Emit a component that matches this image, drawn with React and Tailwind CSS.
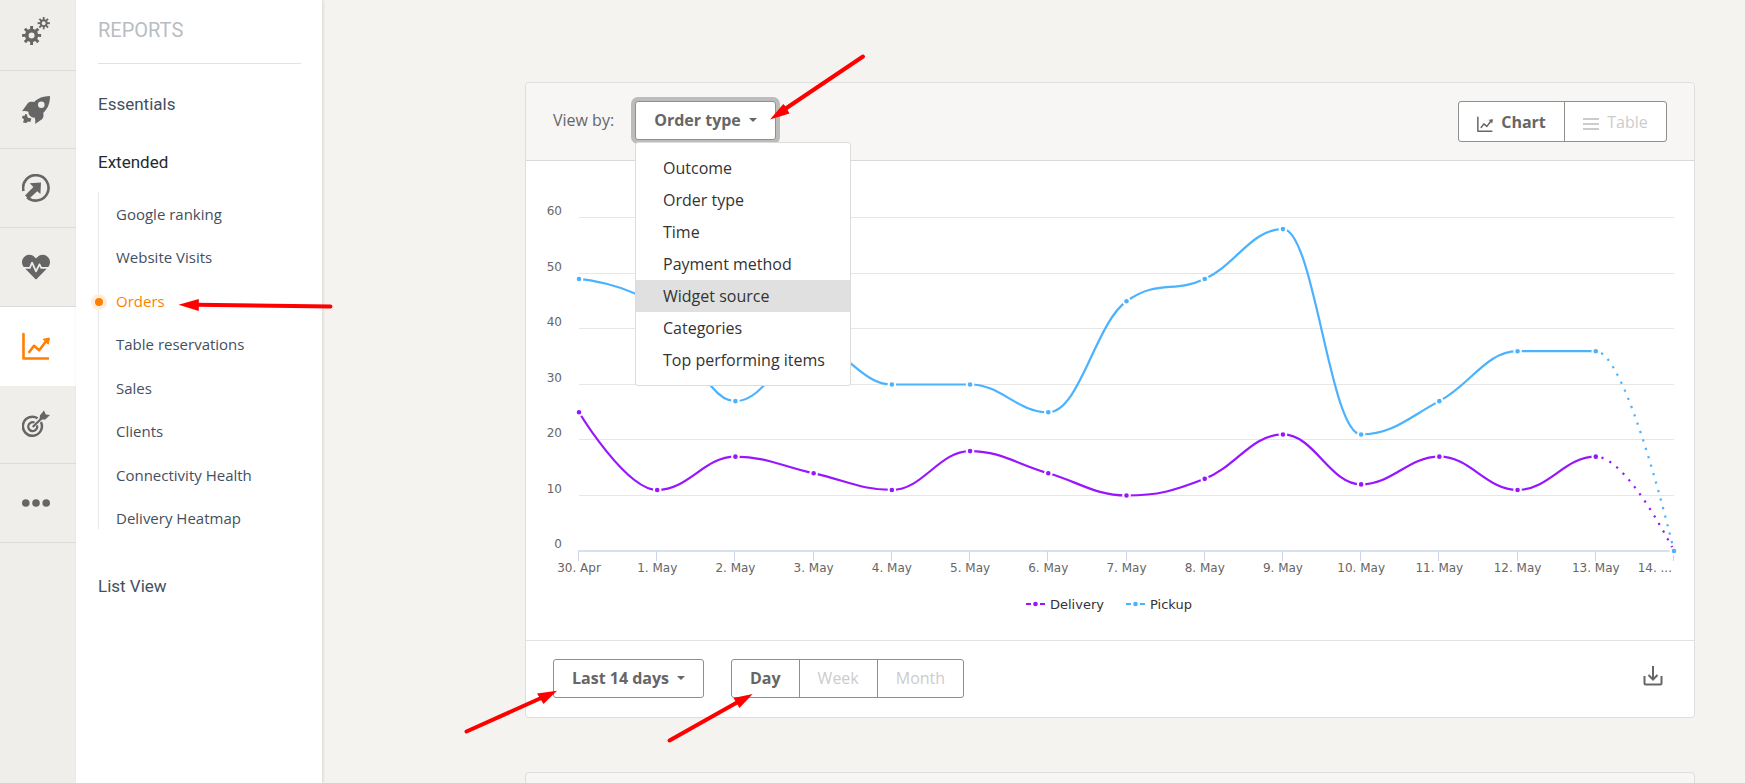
import React, { useState } from 'react';
import { FaHeartbeat } from 'react-icons/fa';

// --- Report data ---
const DAYS = ['30. Apr', '1. May', '2. May', '3. May', '4. May', '5. May', '6. May', '7. May', '8. May', '9. May', '10. May', '11. May', '12. May', '13. May', '14. ...'];

const SERIES = [
    { name: 'Delivery', color: '#9715ff', values: [25, 11, 17, 14, 11, 18, 14, 10, 13, 21, 12, 17, 11, 17, 0] },
    { name: 'Pickup', color: '#4ab2ff', values: [49, 44, 27, 37, 30, 30, 25, 45, 49, 58, 21, 27, 36, 36, 0] },
];

const VIEW_OPTIONS = ['Outcome', 'Order type', 'Time', 'Payment method', 'Widget source', 'Categories', 'Top performing items'];

const REPORTS = ['Google ranking', 'Website Visits', 'Orders', 'Table reservations', 'Sales', 'Clients', 'Connectivity Health', 'Delivery Heatmap'];

// --- Icons ---
const gearPath = (cx, cy, outer, inner, teeth) => {
    const points = [];
    const step = (Math.PI * 2) / teeth;
    for (let i = 0; i < teeth; i++) {
        const a = i * step - Math.PI / 2;
        [[-0.27, inner], [-0.2, outer], [0.2, outer], [0.27, inner]].forEach(([k, r]) => {
            points.push(`${(cx + r * Math.cos(a + k * step)).toFixed(2)} ${(cy + r * Math.sin(a + k * step)).toFixed(2)}`);
        });
    }
    return `M${points.join('L')}Z`;
};

const hole = (cx, cy, r) => `M${cx - r} ${cy}a${r} ${r} 0 1 0 ${r * 2} 0a${r} ${r} 0 1 0 ${-r * 2} 0Z`;

const GearsIcon = () => (
    <svg viewBox="0 0 28 28" className="size-7" fill="currentColor" fillRule="evenodd">
        <path d={gearPath(9.6, 18.4, 9.6, 6.7, 8) + hole(9.6, 18.4, 3)} />
        <path d={gearPath(21.7, 6.2, 6.2, 4, 8) + hole(21.7, 6.2, 2)} />
    </svg>
);

const RocketIcon = () => (
    <svg viewBox="0 0 28 28" className="size-7" fill="currentColor" fillRule="evenodd">
        <path d={'M28 0C21 .2 16 2 12.2 6C9.500 5.600 7.200 5.800 5.800 7.200L0 15.300C2.500 14.800 4.600 15 6.400 15.700C6.300 17.500 7 19 8.300 20C9.500 21.200 10.900 21.800 12.600 21.600C13.300 23.500 13.600 25.600 13.100 28L20 23.300C21.600 21.800 21.700 19.500 21.300 16.800C26 12.500 28 7 28 0Z' + hole(19.3, 8.7, 3.3)} />
        <path d="M3.200 18L5 18.600L5.600 21.500L9.400 22.600L8.300 26L5.800 25.500L4.500 27L1 26.600L2 23.600L0 21.800L.6 19.700L2.700 19.800Z" />
    </svg>
);

const LaunchIcon = () => (
    <svg viewBox="0 0 28 28" className="size-7">
        <path d="M1.500 17A12.700 12.700 0 1 1 5.200 23.200" fill="none" stroke="currentColor" strokeWidth="2.600" />
        <path d="M7.700 9.200L19 8.600L18.400 20L15.200 17.200L6.800 25L3 21.600L11.400 13Z" fill="currentColor" />
    </svg>
);

const TrendIcon = ({ className, weight = 2.6 }) => (
    <svg viewBox="0 0 28 28" className={className} fill="none" stroke="currentColor" strokeWidth={weight} strokeLinecap="round" strokeLinejoin="round">
        <path d="M1.500 2V26.500H26" />
        <path d="M7.300 20L12 13.800L17.200 18.200L23.500 10" />
        <path d="M21.500 7.200L27.500 6L26.300 11.800Z" fill="currentColor" strokeWidth="1" />
    </svg>
);

const TargetIcon = () => (
    <svg viewBox="0 0 28 28" className="size-7" fill="none" stroke="currentColor">
        <path d="M15.600 8.300A9.500 9.500 0 1 0 18.900 12" strokeWidth="2.500" />
        <path d="M12.500 12.500A4.500 4.500 0 1 0 15 15.300" strokeWidth="2.300" />
        <path d="M10.700 17L21 7" strokeWidth="2.200" />
        <path d="M17.500 9.600L18 5.300L22 .6L23.800 4.400L28 5L23.300 9.600Z" fill="currentColor" stroke="none" />
    </svg>
);

const DotsIcon = () => (
    <svg viewBox="0 0 28 28" className="size-7" fill="currentColor">
        <circle cx="3.800" cy="14" r="3.800" />
        <circle cx="14" cy="14" r="3.800" />
        <circle cx="24.200" cy="14" r="3.800" />
    </svg>
);

const DownloadIcon = () => (
    <svg viewBox="0 0 20 20" className="size-5" fill="none" stroke="currentColor" strokeWidth="2">
        <path d="M1.500 10V17.500Q1.500 18.500 2.500 18.500H17.500Q18.500 18.500 18.500 17.500V10" />
        <path d="M10 0V13.500M5.500 9L10 13.500L14.500 9" />
    </svg>
);

const Caret = () => (
    <svg viewBox="0 0 8 4" className="h-1 w-2" fill="currentColor">
        <path d="M0 0H8L4 4Z" />
    </svg>
);

const RAIL = [
    { label: 'Settings', icon: <GearsIcon /> },
    { label: 'Launch', icon: <RocketIcon /> },
    { label: 'Promote', icon: <LaunchIcon /> },
    { label: 'Health', icon: <FaHeartbeat className="size-7" /> },
    { label: 'Reports', icon: <TrendIcon className="size-7" />, active: true },
    { label: 'Marketing', icon: <TargetIcon /> },
    { label: 'More', icon: <DotsIcon /> },
];

// --- Chart ---
const PLOT = { left: 53, right: 1148, top: 57, bottom: 390 };
const plotX = (i) => PLOT.left + (i * (PLOT.right - PLOT.left)) / (DAYS.length - 1);
const plotY = (v) => PLOT.bottom - (v * (PLOT.bottom - PLOT.top)) / 60;

// Smooth curve that never overshoots the neighbouring points
const splineSegments = (values) => {
    const pts = values.map((v, i) => ({ x: plotX(i), y: plotY(v) }));
    const segments = [];
    let prevRight = pts[0];
    for (let i = 1; i < pts.length; i++) {
        const last = pts[i - 1];
        const p = pts[i];
        const next = pts[i + 1];
        let left = p;
        let right = p;
        if (next) {
            left = { x: (1.5 * p.x + last.x) / 2.5, y: (1.5 * p.y + last.y) / 2.5 };
            right = { x: (1.5 * p.x + next.x) / 2.5, y: (1.5 * p.y + next.y) / 2.5 };
            const shift = ((right.y - left.y) * (right.x - p.x)) / (right.x - left.x) + p.y - right.y;
            left.y += shift;
            right.y += shift;
            const clampedLeft = Math.min(Math.max(left.y, Math.min(last.y, p.y)), Math.max(last.y, p.y));
            if (clampedLeft !== left.y) {
                left.y = clampedLeft;
                right.y = 2 * p.y - left.y;
            }
            const clampedRight = Math.min(Math.max(right.y, Math.min(next.y, p.y)), Math.max(next.y, p.y));
            if (clampedRight !== right.y) {
                right.y = clampedRight;
                left.y = 2 * p.y - right.y;
            }
        }
        segments.push({ from: last, d: `C${prevRight.x} ${prevRight.y} ${left.x} ${left.y} ${p.x} ${p.y}` });
        prevRight = right;
    }
    return { pts, segments };
};

const OrdersChart = () => (
    <svg viewBox="0 0 1168 479" className="block w-full font-['DejaVu_Sans',sans-serif] text-[12px]" role="img" aria-label="Orders per day">
        {[10, 20, 30, 40, 50, 60].map((v) => (
            <line key={v} x1={PLOT.left} x2={PLOT.right} y1={Math.round(plotY(v)) - 0.5} y2={Math.round(plotY(v)) - 0.5} stroke="#e6e6e6" />
        ))}
        {[0, 10, 20, 30, 40, 50, 60].map((v) => (
            <text key={v} x="36" y={Math.round(plotY(v)) - 3} textAnchor="end" fill="#666">{v}</text>
        ))}
        <line x1={PLOT.left - 1} x2={PLOT.right} y1="390" y2="390" stroke="#ccd6eb" strokeWidth="1.5" />
        {DAYS.map((day, i) => (
            <g key={day}>
                <line x1={Math.round(plotX(i)) - 0.5} x2={Math.round(plotX(i)) - 0.5} y1="390" y2="400" stroke="#ccd6eb" />
                <text x={i === 14 ? PLOT.right - 2 : plotX(i)} y="411" textAnchor={i === 14 ? 'end' : 'middle'} fill="#666">{day}</text>
            </g>
        ))}

        {SERIES.map((s) => {
            const { pts, segments } = splineSegments(s.values);
            const solid = segments.slice(0, -1);
            const tail = segments[segments.length - 1];
            return (
                <g key={s.name}>
                    <path d={`M${pts[0].x} ${pts[0].y}${solid.map((g) => g.d).join('')}`} fill="none" stroke={s.color} strokeWidth="2.200" />
                    <path d={`M${tail.from.x} ${tail.from.y}${tail.d}`} fill="none" stroke={s.color} strokeWidth="2.200" strokeDasharray="2.200 6.600" strokeDashoffset="3" />
                    {pts.map((p) => (
                        <circle key={p.x} cx={p.x} cy={p.y} r="3.300" fill={s.color} stroke="#fff" strokeWidth="2" />
                    ))}
                </g>
            );
        })}

        {/* Legend */}
        {SERIES.map((s, i) => (
            <g key={s.name} transform={`translate(${500 + i * 100} 443)`}>
                <path d="M0 0H5M14 0H19" stroke={s.color} strokeWidth="2" />
                <circle cx="9.500" cy="0" r="2.300" fill={s.color} />
                <text x="24" y="5" fill="#333" className="text-[13px]">{s.name}</text>
            </g>
        ))}
    </svg>
);

// --- Annotation arrows ---
const Arrows = () => (
    <svg className="pointer-events-none absolute inset-0 z-20 size-full" stroke="#f00" fill="#f00" strokeLinecap="round" aria-hidden="true">
        <path d="M863 56.500L785 109" strokeWidth="4" />
        <path d="M770 119.500L783.300 104L786 107L789.500 113.500Z" stroke="none" />
        <path d="M330.500 306.500L196 304.800" strokeWidth="4" />
        <path d="M178.500 304.700L198.800 299V311Z" stroke="none" />
        <path d="M466.500 731.500L540 698.500" strokeWidth="4" />
        <path d="M557 690.700L537 693.500L543.500 704Z" stroke="none" />
        <path d="M669.500 740.500L737 702.500" strokeWidth="4" />
        <path d="M752.700 694L733.500 698L739.500 708Z" stroke="none" />
    </svg>
);

const App = () => {
    const [viewBy, setViewBy] = useState('Order type');
    const [menuOpen, setMenuOpen] = useState(true);
    const [mode, setMode] = useState('Chart');
    const [period, setPeriod] = useState('Day');

    return (
        <div className="relative flex h-screen overflow-hidden bg-[#f4f3ef] font-['Open_Sans',sans-serif] text-[16px] text-[#666]">

            {/* Icon rail */}
            <nav className="w-[76px] shrink-0 bg-[#efeeea]" aria-label="Main">
                <div className="-mt-2 grid h-[551px] grid-rows-7">
                    {RAIL.map((item) => (
                        <a
                            key={item.label}
                            href="#"
                            aria-label={item.label}
                            className={`flex items-center border-b pl-[22px] ${item.active ? 'border-white bg-white text-[#ff7f00]' : 'border-[#dbdbd9]'}`}
                        >
                            {item.icon}
                        </a>
                    ))}
                </div>
            </nav>

            {/* Reports menu */}
            <aside className="w-[246px] shrink-0 bg-white pr-[21px] pl-[22px] font-[Roboto,sans-serif] text-[17px] text-[#44505e] shadow-[1px_0_3px_rgba(0,0,0,0.12)]">
                <h2 className="h-16 border-b border-[#e2e2e2] pt-[18px] text-[20px] leading-6 text-[#b9bdc2]">REPORTS</h2>
                <a href="#" className="mt-7 block leading-6">Essentials</a>
                <a href="#" className="mt-[34px] block leading-6 text-[#222a33]">Extended</a>
                <ul className="mt-[18px] flex h-[337px] flex-col justify-between border-l border-[#e8e8e8] pt-3 pb-px pl-[17px] font-['Open_Sans',sans-serif] text-[15px] leading-5">
                    {REPORTS.map((name) => (
                        <li key={name} className="relative">
                            {name === 'Orders' && (
                                <span className="absolute top-[3px] -left-[25px] flex size-4 items-center justify-center rounded-full bg-[#ffeedd]">
                                    <span className="size-2 rounded-full bg-[#ff7f00]" />
                                </span>
                            )}
                            <a href="#" className={name === 'Orders' ? 'text-[#ff7f00]' : ''}>{name}</a>
                        </li>
                    ))}
                </ul>
                <a href="#" className="mt-[45px] block leading-6">List View</a>
            </aside>

            {/* Content */}
            <main className="flex-1 pt-[82px] pr-[50px] pl-[203px]">
                <section className="rounded border border-[#dedede] bg-white">
                    <div className="flex h-[78px] items-start justify-between rounded-t border-b border-[#d9d9d9] bg-[#f7f6f4] px-[27px] pt-[18px]">
                        <div className="flex items-center">
                            <label htmlFor="view-by" className="w-[82px] pb-0.5">View by:</label>
                            <div className="relative">
                                <button
                                    id="view-by"
                                    aria-haspopup="listbox"
                                    aria-expanded={menuOpen}
                                    onClick={() => setMenuOpen(!menuOpen)}
                                    className="flex h-[39px] w-[141px] items-center justify-center gap-2 rounded-[3px] border border-[#8e908d] bg-white pb-0.5 font-bold shadow-[0_0_0_4px_#bcbdbb]"
                                >
                                    {viewBy}
                                    <Caret />
                                </button>
                                {menuOpen && (
                                    <ul role="listbox" className="absolute top-[41px] left-0 z-10 w-[216px] rounded-[3px] border border-[#dcdcdc] bg-white py-[9px] text-[#333]">
                                        {VIEW_OPTIONS.map((option) => (
                                            <li
                                                key={option}
                                                role="option"
                                                aria-selected={option === viewBy}
                                                onClick={() => setViewBy(option)}
                                                className={`cursor-pointer px-[27px] leading-8 whitespace-nowrap ${option === 'Widget source' ? 'bg-[#e0e0e0]' : ''}`}
                                            >
                                                {option}
                                            </li>
                                        ))}
                                    </ul>
                                )}
                            </div>
                        </div>

                        <div className="flex h-[41px] divide-x divide-[#8e908d] rounded-[3px] border border-[#8e908d] bg-white">
                            <button
                                onClick={() => setMode('Chart')}
                                className={`flex w-[106px] items-center justify-center gap-2 ${mode === 'Chart' ? 'font-bold' : 'text-[#ccc]'}`}
                            >
                                <TrendIcon className="mt-1 size-4" />
                                Chart
                            </button>
                            <button
                                onClick={() => setMode('Table')}
                                className={`flex w-[101px] items-center justify-center gap-2 ${mode === 'Table' ? 'font-bold' : 'text-[#ccc]'}`}
                            >
                                <svg viewBox="0 0 16 16" className="mt-1 size-4" stroke="currentColor" strokeWidth="2">
                                    <path d="M0 3H16M0 8H16M0 13H16" />
                                </svg>
                                Table
                            </button>
                        </div>
                    </div>

                    <OrdersChart />

                    <div className="flex h-[77px] items-start justify-between border-t border-[#e2e2e2] px-[27px] pt-[18px]">
                        <div className="flex gap-[27px]">
                            <div className="relative">
                                <select
                                    aria-label="Date range"
                                    className="h-[39px] w-[151px] appearance-none rounded-[3px] border border-[#8e908d] bg-white pb-0.5 pl-[18px] font-bold"
                                >
                                    <option>Last 14 days</option>
                                </select>
                                <span className="pointer-events-none absolute top-[17px] right-[19px]">
                                    <Caret />
                                </span>
                            </div>
                            <div className="flex h-[39px] divide-x divide-[#8e908d] rounded-[3px] border border-[#8e908d] bg-white">
                                {['Day', 'Week', 'Month'].map((name) => (
                                    <button
                                        key={name}
                                        aria-pressed={period === name}
                                        onClick={() => setPeriod(name)}
                                        className={`px-[18px] pb-0.5 ${period === name ? 'font-bold' : 'text-[#ccc]'}`}
                                    >
                                        {name}
                                    </button>
                                ))}
                            </div>
                        </div>
                        <button aria-label="Download" className="mt-[7px] mr-1">
                            <DownloadIcon />
                        </button>
                    </div>
                </section>

                <section className="mt-[54px] h-20 rounded border border-[#dedede] bg-[#f7f6f4]" />
            </main>

            <Arrows />
        </div>
    );
};

export default App;
